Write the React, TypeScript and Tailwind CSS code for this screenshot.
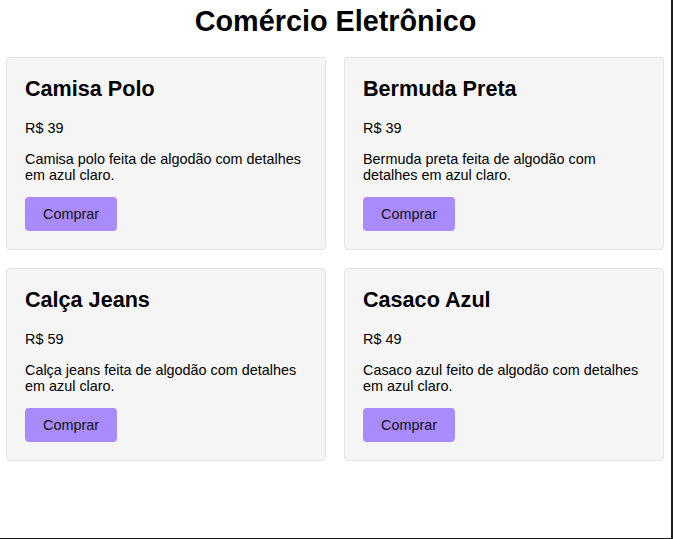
type Produto = {
  nome: string
  preco: number
  descricao: string
}

const produtos: Produto[] = [
  {
    nome: 'Camisa Polo',
    preco: 39,
    descricao: 'Camisa polo feita de algodão com detalhes em azul claro.',
  },
  {
    nome: 'Bermuda Preta',
    preco: 39,
    descricao: 'Bermuda preta feita de algodão com detalhes em azul claro.',
  },
  {
    nome: 'Calça Jeans',
    preco: 59,
    descricao: 'Calça jeans feita de algodão com detalhes em azul claro.',
  },
  {
    nome: 'Casaco Azul',
    preco: 49,
    descricao: 'Casaco azul feito de algodão com detalhes em azul claro.',
  },
]

export default function App() {
  return (
    <div
      className="w-[673px] h-[539px] overflow-hidden bg-white text-black border-r-2 border-b border-[#1e1e1e]"
      style={{ fontFamily: '"Liberation Sans", Arial, sans-serif' }}
    >
      <h1 className="mt-[5px] text-center text-[28.8px] leading-[33px] font-bold">
        Comércio Eletrônico
      </h1>

      <div className="mt-[19px] pl-[6px] grid grid-cols-[320px_320px] gap-[18px]">
        {produtos.map((produto) => (
          <div
            key={produto.nome}
            className="h-[193px] p-[18px] bg-[#f5f5f5] border border-[#e3e3e3] rounded-[4px]"
          >
            <h2 className="text-[21.6px] leading-[25px] font-bold">{produto.nome}</h2>
            <p className="mt-[19px] text-[14.4px] leading-[16.5px]">R$ {produto.preco}</p>
            <p className="mt-[14px] text-[14.4px] leading-[16.5px] pr-[4px]">
              {produto.descricao}
            </p>
            <button className="mt-[13px] h-[34px] pt-[2px] px-[18px] text-[14.4px] leading-[16.5px] bg-[#a98bfc] rounded-[4px] text-[#111]">
              Comprar
            </button>
          </div>
        ))}
      </div>
    </div>
  )
}
